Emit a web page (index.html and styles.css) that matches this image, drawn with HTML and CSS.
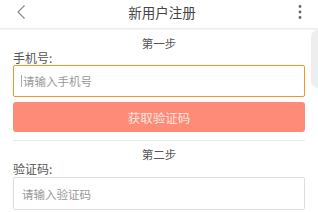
FILE: index.html
```html
<!DOCTYPE html>
<html lang="zh">
<head>
    <meta charset="UTF-8">
    <meta name="viewport" content="width=device-width, initial-scale=1.0">
    <title>新用户注册</title>
    <link rel="stylesheet" href="styles.css">
</head>
<body>
    <header class="topbar">
        <button class="back">
            <svg width="10" height="16" viewBox="0 0 10 16"><path d="M8.5 1.5 L2 8 L8.5 14.5" fill="none" stroke="#8a8a8a" stroke-width="1.2"/></svg>
        </button>
        <h1>新用户注册</h1>
        <button class="more">
            <svg width="4" height="16" viewBox="0 0 4 16"><circle cx="2" cy="2.5" r="1.4" fill="#666"/><circle cx="2" cy="8" r="1.4" fill="#666"/><circle cx="2" cy="13.5" r="1.4" fill="#666"/></svg>
        </button>
    </header>
    <div class="scroll-hint"></div>
    <main class="form">
        <div class="step">第一步</div>
        <label class="label">手机号:</label>
        <div class="field active"><span class="caret"></span>请输入手机号</div>
        <button class="send">获取验证码</button>
        <hr class="divider">
        <div class="step">第二步</div>
        <label class="label">验证码:</label>
        <div class="field">请输入验证码</div>
    </main>
</body>
</html>
```

FILE: styles.css
```css
body {
    margin: 0;
    background-color: #fff;
    font-family: "Noto Sans CJK SC", "Noto Sans", sans-serif;
    color: #555;
    overflow: hidden;
}
.topbar {
    height: 28px;
    display: flex;
    align-items: center;
    justify-content: space-between;
    padding: 0 16px 0 16px;
    border-bottom: 1px solid #ececec;
    box-shadow: 0 1px 1px #f3f3f3;
}
.topbar h1 {
    margin: -4px 0 0 0;
    font-size: 13.5px;
    font-weight: normal;
    color: #444;
}
.topbar button {
    background: none;
    border: none;
    padding: 0;
    display: flex;
}
.back {
    margin-top: -4px;
}
.more {
    margin-top: -5px;
}
.scroll-hint {
    position: absolute;
    right: 0;
    top: 30px;
    width: 7px;
    height: 58px;
    background-color: #eeeeee;
    border-radius: 8px 0 0 8px;
}
.form {
    padding: 0 13px;
}
.step {
    text-align: center;
    font-size: 11.5px;
    color: #555;
    margin-top: 6px;
    line-height: 16px;
}
.label {
    display: block;
    font-size: 12px;
    color: #555;
    line-height: 14px;
    margin-top: 0;
}
.field {
    display: flex;
    align-items: center;
    height: 31px;
    border: 1px solid #ddd;
    border-radius: 2px;
    padding-left: 8px;
    font-size: 11.5px;
    color: #999;
    margin-top: 1px;
}
.field.active {
    border: 1.5px solid #f0962c;
    height: 30px;
    padding-left: 7px;
    margin-top: 0;
}
.caret {
    width: 1px;
    height: 12px;
    background-color: #aaa;
    margin-right: 1px;
}
.send {
    display: block;
    width: 100%;
    height: 30px;
    margin-top: 5px;
    border: none;
    border-radius: 3px;
    background-color: #fe8b78;
    color: #fde4df;
    font-family: inherit;
    font-size: 12.5px;
}
.divider {
    border: none;
    border-top: 1px solid #ebebeb;
    margin: 8px 0 0 0;
}
.divider + .step {
    margin-top: 5px;
}
```
